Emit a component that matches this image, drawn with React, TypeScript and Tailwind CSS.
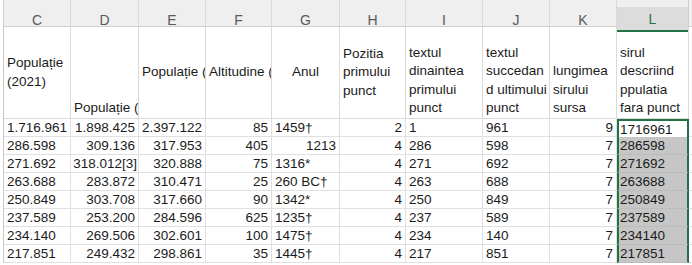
const font = { fontFamily: '"Liberation Sans", Arial, sans-serif' };

type Align = "l" | "r" | "c";

const cols = ["C", "D", "E", "F", "G", "H", "I", "J", "K", "L"];

// data rows: [value, align] per column C..L
const rows: [string, Align][][] = [
  [["1.716.961", "l"], ["1.898.425", "r"], ["2.397.122", "r"], ["85", "r"], ["1459†", "l"], ["2", "r"], ["1", "l"], ["961", "l"], ["9", "r"], ["1716961", "l"]],
  [["286.598", "l"], ["309.136", "r"], ["317.953", "r"], ["405", "r"], ["1213", "r"], ["4", "r"], ["286", "l"], ["598", "l"], ["7", "r"], ["286598", "l"]],
  [["271.692", "l"], ["318.012[3]", "r"], ["320.888", "r"], ["75", "r"], ["1316*", "l"], ["4", "r"], ["271", "l"], ["692", "l"], ["7", "r"], ["271692", "l"]],
  [["263.688", "l"], ["283.872", "r"], ["310.471", "r"], ["25", "r"], ["260 BC†", "l"], ["4", "r"], ["263", "l"], ["688", "l"], ["7", "r"], ["263688", "l"]],
  [["250.849", "l"], ["303.708", "r"], ["317.660", "r"], ["90", "r"], ["1342*", "l"], ["4", "r"], ["250", "l"], ["849", "l"], ["7", "r"], ["250849", "l"]],
  [["237.589", "l"], ["253.200", "r"], ["284.596", "r"], ["625", "r"], ["1235†", "l"], ["4", "r"], ["237", "l"], ["589", "l"], ["7", "r"], ["237589", "l"]],
  [["234.140", "l"], ["269.506", "r"], ["302.601", "r"], ["100", "r"], ["1475†", "l"], ["4", "r"], ["234", "l"], ["140", "l"], ["7", "r"], ["234140", "l"]],
  [["217.851", "l"], ["249.432", "r"], ["298.861", "r"], ["35", "r"], ["1445†", "l"], ["4", "r"], ["217", "l"], ["851", "l"], ["7", "r"], ["217851", "l"]],
];

const grid =
  "grid grid-cols-[4px_67px_68px_67px_66px_68px_66px_77px_67px_67px_72px_1fr]";

const HeadCell = ({
  lines,
  v,
  h = "l",
}: {
  lines: string[];
  v: "center" | "end";
  h?: Align;
}) => (
  <div
    className={`flex h-[92px] flex-col overflow-hidden whitespace-nowrap border-r border-b border-[#dadada] pl-[3px] leading-[18.6px] ${
      v === "center" ? "justify-center" : "justify-end"
    } ${h === "c" ? "items-center pr-[3px]" : "items-start"}`}
  >
    {lines.map((l) => (
      <span key={l}>{l}</span>
    ))}
  </div>
);

export default function App() {
  return (
    <div
      className="h-[265px] w-[692px] overflow-hidden bg-white text-[13.5px] text-[#1b1b1b]"
      style={font}
    >
      {/* column letters */}
      <div className={`${grid} h-[27px] border-b border-[#cfcfcf] bg-[#efefef] text-[14px]`}>
        <div className="border-r border-[#cfcfcf] bg-white" />
        {cols.map((c) =>
          c === "L" ? (
            <div key={c} className="flex flex-col border-r border-[#cfcfcf]">
              <div className="h-[7px]" />
              <div className="flex flex-1 items-center justify-center border-b-2 border-[#217346] bg-[#dcdcdc] pt-[2px] text-[#217346]">
                {c}
              </div>
            </div>
          ) : (
            <div
              key={c}
              className="flex items-center justify-center border-r border-[#d9d9d9] pt-[8px] text-[#5a5a5a]"
            >
              {c}
            </div>
          )
        )}
        <div />
      </div>

      {/* header row */}
      <div className={grid}>
        <div className="border-r border-[#c8c8c8]" />
        <HeadCell lines={["Populație", "(2021)"]} v="center" />
        <HeadCell lines={["Populație ("]} v="end" />
        <HeadCell lines={["Populație ("]} v="center" />
        <HeadCell lines={["Altitudine ("]} v="center" />
        <HeadCell lines={["Anul"]} v="center" h="c" />
        <HeadCell lines={["Pozitia", "primului", "punct"]} v="center" />
        <HeadCell lines={["textul", "dinaintea", "primului", "punct"]} v="end" />
        <HeadCell lines={["textul", "succedan", "d ultimului", "punct"]} v="end" />
        <HeadCell lines={["lungimea", "sirului", "sursa"]} v="end" />
        <HeadCell lines={["sirul", "descriind", "ppulatia", "fara punct"]} v="end" />
        <div />
      </div>

      {/* data */}
      {rows.map((r, i) => (
        <div key={i} className={grid}>
          <div className="border-r border-[#c8c8c8]" />
          {r.map(([val, al], j) =>
            j === 9 ? (
              <div
                key={j}
                className={`h-[18px] overflow-visible whitespace-nowrap border-x-2 border-[#217346] pl-[1px] leading-[18px] ${
                  i === 0 ? "border-t-2 bg-white leading-[16px]" : "border-b border-b-[#bcbcbc] bg-[#c6c6c6]"
                }`}
              >
                {val}
              </div>
            ) : (
              <div
                key={j}
                className={`h-[18px] whitespace-nowrap border-r border-b border-[#e0e0e0] px-[3px] leading-[18px] ${
                  al === "r" ? "text-right" : "text-left"
                } ${j === 1 && i === 2 ? "overflow-visible pl-0 pr-[1px]" : "overflow-hidden"}`}
              >
                {val}
              </div>
            )
          )}
          <div className="border-b border-[#e0e0e0]" />
        </div>
      ))}
    </div>
  );
}
